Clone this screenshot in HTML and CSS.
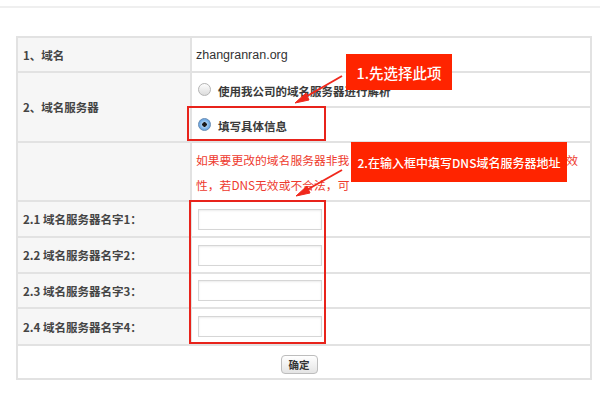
FILE: index.html
```html
<!DOCTYPE html>
<html lang="zh">
<head>
<meta charset="utf-8">
<link rel="stylesheet" href="styles.css">
</head>
<body>
<div class="topbar"></div>
<div class="wrap">
  <table class="form">
    <colgroup>
      <col class="c-left">
      <col class="c-right">
    </colgroup>
    <tr class="r35">
      <td class="lbl">1、域名</td>
      <td class="val domain">zhangranran.org</td>
    </tr>
    <tr class="r35">
      <td class="lbl" rowspan="2">2、域名服务器</td>
      <td class="val"><span class="radio"></span><span class="rtext">使用我公司的域名服务器进行解析</span></td>
    </tr>
    <tr class="r35">
      <td class="val"><span class="radio on"></span><span class="rtext">填写具体信息</span></td>
    </tr>
    <tr class="r59">
      <td class="lbl"></td>
      <td class="val warn">
        <div class="wline"><span>如果要更改的域名服务器非我</span><span>效</span></div>
        <div class="wline2">性，若DNS无效或不合法，可</div>
      </td>
    </tr>
    <tr class="r36">
      <td class="lbl">2.1 域名服务器名字1：</td>
      <td class="val"><span class="inp"></span></td>
    </tr>
    <tr class="r36">
      <td class="lbl">2.2 域名服务器名字2：</td>
      <td class="val"><span class="inp"></span></td>
    </tr>
    <tr class="r35">
      <td class="lbl">2.3 域名服务器名字3：</td>
      <td class="val"><span class="inp"></span></td>
    </tr>
    <tr class="r37">
      <td class="lbl">2.4 域名服务器名字4：</td>
      <td class="val"><span class="inp"></span></td>
    </tr>
    <tr class="r34">
      <td class="btncell" colspan="2"><span class="btn">确定</span></td>
    </tr>
  </table>
</div>

<div class="mark mark1"></div>
<div class="mark mark2"></div>
<div class="callout c1">1.先选择此项</div>
<div class="callout c2">2.在输入框中填写DNS域名服务器地址</div>
<svg class="arrows" width="600" height="400" viewBox="0 0 600 400">
  <g stroke="#f0281c" stroke-width="2" fill="#f0281c">
    <line x1="342" y1="76" x2="302" y2="99"/>
    <polygon points="295,103 306,93 309,100" stroke-width="1"/>
    <line x1="342" y1="170" x2="303" y2="192"/>
    <polygon points="296,196 307,186 310,193" stroke-width="1"/>
  </g>
</svg>
</body>
</html>
```

FILE: styles.css
```css
html, body {
  margin: 0;
  padding: 0;
  background: #ffffff;
  width: 600px;
  height: 400px;
  overflow: hidden;
  font-family: "Noto Sans CJK SC", "Noto Sans", sans-serif;
}
.topbar {
  height: 6px;
  border-bottom: 2px solid #efefef;
}
.wrap {
  padding: 28px 0 0 16px;
}
.form {
  border-collapse: collapse;
  width: 574px;
  table-layout: fixed;
  border: 2px solid #dedede;
}
.c-left { width: 174px; }
.c-right { width: 400px; }
.form td {
  border: 2px solid #e2e2e2;
  padding: 0;
  vertical-align: middle;
}
.r34 td { height: 32px; }
.r35 td { height: 33px; }
.r36 td { height: 34px; }
.r37 td { height: 35px; }
.r59 td { height: 57px; }
.lbl {
  background: #f6f6f6;
  color: #444444;
  font-size: 11.5px;
  font-weight: 600;
  padding-left: 5px !important;
  white-space: nowrap;
}
.val {
  background: #ffffff;
  padding-left: 4px !important;
  color: #333333;
  font-size: 12px;
}
.domain {
  font-family: "Liberation Sans", "Noto Sans", sans-serif;
  font-size: 12.5px;
  color: #333;
}
.radio {
  display: inline-block;
  width: 11px;
  height: 11px;
  border-radius: 50%;
  border: 1px solid #b5b5b5;
  background: linear-gradient(#fdfdfd, #dcdcdc);
  vertical-align: middle;
  margin-left: 2px;
  margin-right: 7px;
  position: relative;
  top: -1px;
}
.radio.on {
  border-color: #6e8fb5;
  background: radial-gradient(circle, #1a1a1a 0 2px, #a9cdf0 2.5px, #5b9fe0 6px);
}
.rtext {
  font-size: 11.5px;
  font-weight: 600;
  color: #3a3a3a;
  vertical-align: middle;
}
.warn {
  color: #ee3a2e;
  font-size: 11.8px;
  line-height: 25px;
  white-space: nowrap;
}
.wline {
  display: flex;
  justify-content: space-between;
  width: 382px;
}
.inp {
  display: block;
  width: 122px;
  height: 19px;
  margin-left: 2px;
  border: 1px solid #d6d6d6;
  box-shadow: inset 0 1px 2px rgba(0,0,0,0.08);
  background: #fff;
}
.btncell {
  text-align: center;
  background: #fff;
}
.btn {
  display: inline-block;
  width: 35px;
  height: 17px;
  line-height: 17px;
  border: 1px solid #bdbdbd;
  border-radius: 4px;
  background: linear-gradient(#ffffff, #e4e4e4);
  font-size: 10.5px;
  font-weight: 600;
  color: #333;
  text-align: center;
  margin-left: -10px;
  margin-top: -4px;
}
.mark {
  position: absolute;
  border: 2px solid #e8231b;
  box-sizing: border-box;
}
.mark1 { left: 187px; top: 106px; width: 139px; height: 35px; }
.mark2 { left: 189px; top: 200px; width: 137px; height: 144px; }
.callout {
  position: absolute;
  background: #ff2400;
  color: #ffffff;
  font-weight: 500;
  white-space: nowrap;
  display: flex;
  align-items: center;
  justify-content: center;
}
.c1 {
  left: 346px; top: 54px; width: 106px; height: 36px;
  font-size: 14.5px;
}
.c2 {
  left: 351px; top: 142px; width: 216px; height: 40px;
  font-size: 12px;
}
.arrows {
  position: absolute;
  left: 0;
  top: 0;
  pointer-events: none;
}
```
